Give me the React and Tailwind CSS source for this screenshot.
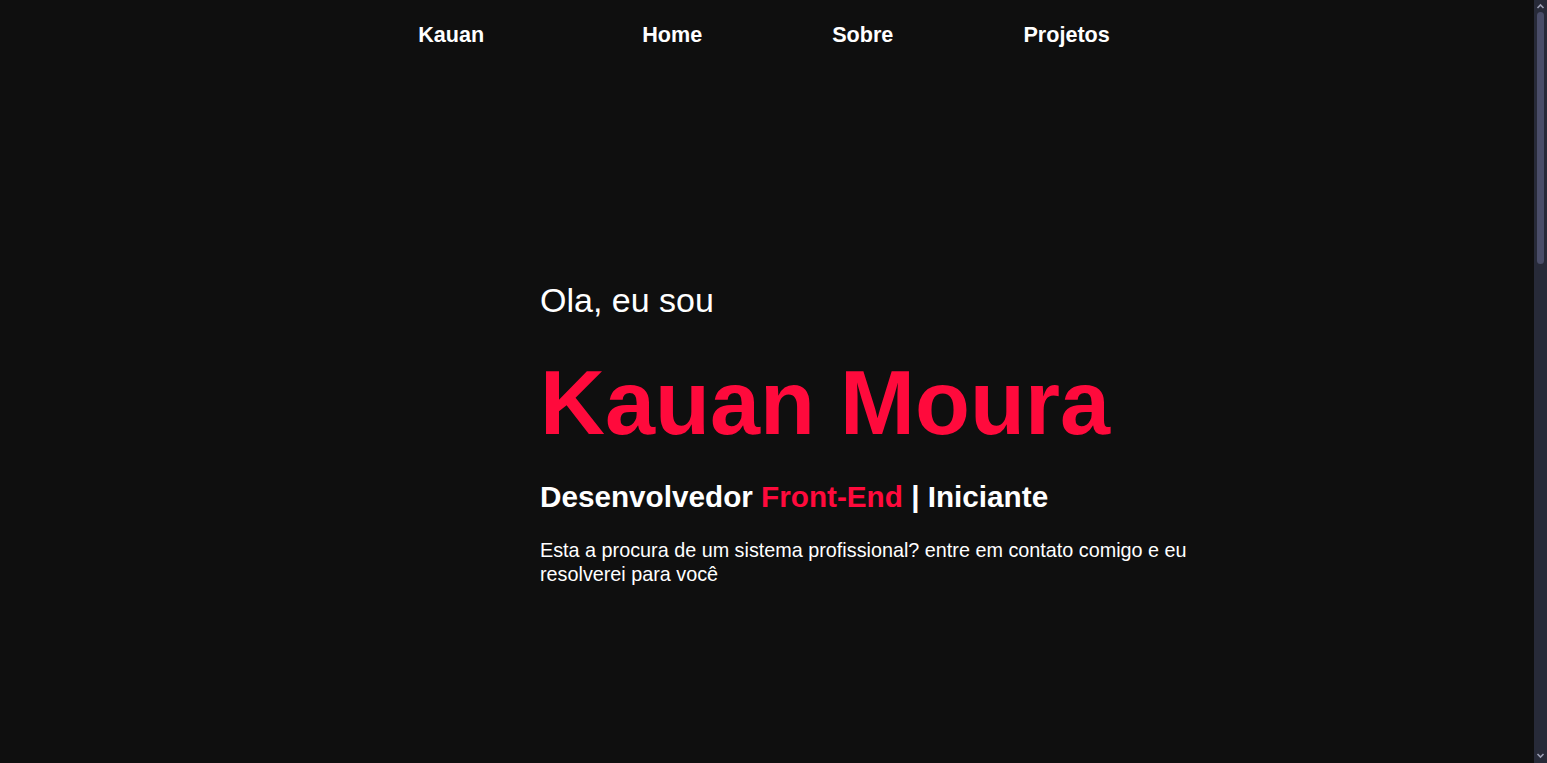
export default function App() {
  const links = ["Home", "Sobre", "Projetos"];

  return (
    <div className="flex h-screen overflow-hidden bg-[#0f0f0f] font-['Liberation_Sans',Arial,sans-serif] text-white">
      <div className="flex-1">
        <nav className="flex h-[70px] items-center justify-center pr-[6px]">
          <span className="text-[21.6px] font-bold">Kauan</span>
          <ul className="ml-[158px] flex gap-[130px]">
            {links.map((link) => (
              <li key={link} className="text-[21.6px] font-bold">
                {link}
              </li>
            ))}
          </ul>
        </nav>

        <section className="pl-[540px] pt-[210px]">
          <div className="max-w-[700px]">
            <p className="text-[34px] leading-[40px]">Ola, eu sou</p>
            <h1 className="mt-[32px] text-[90px] font-bold leading-[103px] text-[#ff0a3c]">
              Kauan Moura
            </h1>
            <h2 className="mt-[24px] text-[29.7px] font-bold leading-[35px]">
              Desenvolvedor <span className="text-[#ff0a3c]">Front-End</span> |
              Iniciante
            </h2>
            <p className="mt-[24px] text-[19.8px] leading-[24px]">
              Esta a procura de um sistema profissional? entre em contato
              comigo e eu resolverei para você
            </p>
          </div>
        </section>
      </div>

      {/* fake scrollbar */}
      <div className="flex w-[13px] flex-col items-center bg-[#272a38]">
        <svg width="9" height="10" viewBox="0 0 9 10" className="mt-[1px]">
          <path d="M1.5 7 L4.5 4 L7.5 7" fill="none" stroke="#9b9db2" strokeWidth="1.6" />
        </svg>
        <div className="mt-[1px] h-[252px] w-[7px] rounded-full bg-[#4a4d68]" />
        <div className="flex-1" />
        <svg width="9" height="10" viewBox="0 0 9 10" className="mb-[2px]">
          <path d="M1.5 3 L4.5 6 L7.5 3" fill="none" stroke="#9b9db2" strokeWidth="1.6" />
        </svg>
      </div>
    </div>
  );
}
